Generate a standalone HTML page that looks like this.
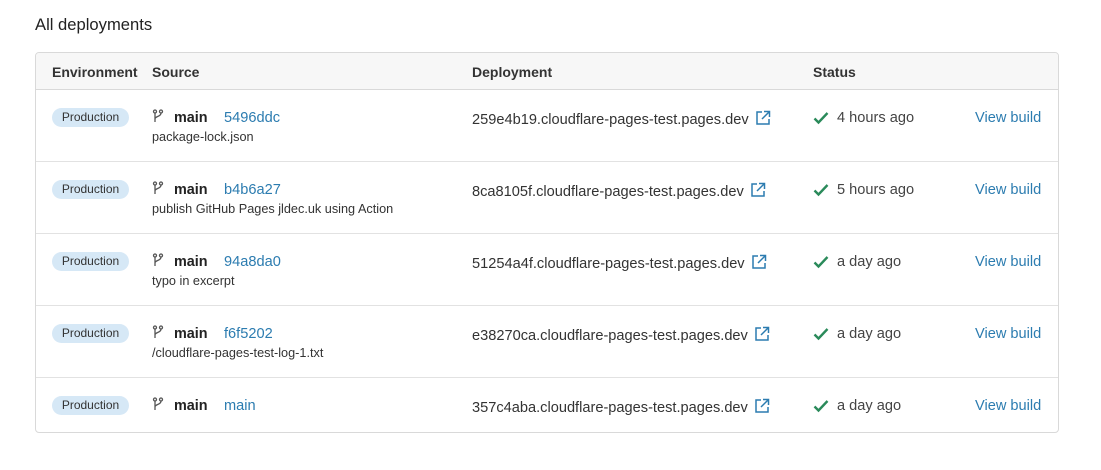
<!DOCTYPE html>
<html><head><style>
body{margin:0;background:#fff;font-family:"Liberation Sans",sans-serif;color:#222;width:1101px;height:470px;overflow:hidden}
h2{position:absolute;left:35px;top:15px;margin:0;font-size:16.6px;font-weight:normal;color:#222}
.t{position:absolute;left:35px;top:52px;width:1022px;height:379px;border:1px solid #d9d9d9;border-radius:4px;overflow:hidden}
.hd{height:36px;background:#f7f7f7;border-bottom:1px solid #d9d9d9;position:relative;font-size:14px;font-weight:bold;color:#333}
.hd span,.r span,.r div{position:absolute}
.r{position:relative;height:71px;border-bottom:1px solid #e2e2e2;font-size:14.6px}
.r.last{border-bottom:none;height:54px}
.b{left:16px;top:18px;width:77px;height:19px;border-radius:10px;background:#d6e8f6;font-size:12px;line-height:19px;text-align:center;color:#333}
.br{left:116px;top:19px}
.mn{left:138px;top:20px;font-weight:bold;font-size:14.4px}
.cm{left:188px;top:20px;color:#2c7cb0}
.msg{left:116px;top:40px;font-size:12.7px;color:#333}
.dp{left:436px;top:20px;color:#333}
.ck{left:777px;top:21px}
.st{left:801px;top:20px;color:#444}
.vb{left:939px;top:20px;color:#2c7cb0}
</style></head><body>
<h2>All deployments</h2>
<div class="t">
<div class="hd"><span style="left:16px;top:11px">Environment</span><span style="left:116px;top:11px">Source</span><span style="left:436px;top:11px">Deployment</span><span style="left:777px;top:11px">Status</span></div>
<div class="r"><div class="b">Production</div><span class="br"><svg width="12" height="14" viewBox="0 0 12 14" fill="none" stroke="#555" stroke-width="1.3"><circle cx="3" cy="2.5" r="1.5"/><circle cx="9" cy="2.5" r="1.5"/><path d="M3 4v9M9 4c0 4-6 3-6 6"/></svg></span><span class="mn">main</span><span class="cm">5496ddc</span><span class="msg">package-lock.json</span><span class="dp">259e4b19.cloudflare-pages-test.pages.dev <svg style="vertical-align:-2px;margin-left:2px" width="16" height="16" viewBox="0 0 16 16" fill="none" stroke="#2c7cb0" stroke-width="1.5"><path d="M7 2H2v12h12V9M9 1.5h5.5V7M14.5 1.5L7 9"/></svg></span><span class="ck"><svg width="16" height="14" viewBox="0 0 16 14" fill="none" stroke="#2a8a5a" stroke-width="2.4"><path d="M1.5 7.5l4 4L14.5 2"/></svg></span><span class="st">4 hours ago</span><span class="vb">View build</span></div>
<div class="r"><div class="b">Production</div><span class="br"><svg width="12" height="14" viewBox="0 0 12 14" fill="none" stroke="#555" stroke-width="1.3"><circle cx="3" cy="2.5" r="1.5"/><circle cx="9" cy="2.5" r="1.5"/><path d="M3 4v9M9 4c0 4-6 3-6 6"/></svg></span><span class="mn">main</span><span class="cm">b4b6a27</span><span class="msg">publish GitHub Pages jldec.uk using Action</span><span class="dp">8ca8105f.cloudflare-pages-test.pages.dev <svg style="vertical-align:-2px;margin-left:2px" width="16" height="16" viewBox="0 0 16 16" fill="none" stroke="#2c7cb0" stroke-width="1.5"><path d="M7 2H2v12h12V9M9 1.5h5.5V7M14.5 1.5L7 9"/></svg></span><span class="ck"><svg width="16" height="14" viewBox="0 0 16 14" fill="none" stroke="#2a8a5a" stroke-width="2.4"><path d="M1.5 7.5l4 4L14.5 2"/></svg></span><span class="st">5 hours ago</span><span class="vb">View build</span></div>
<div class="r"><div class="b">Production</div><span class="br"><svg width="12" height="14" viewBox="0 0 12 14" fill="none" stroke="#555" stroke-width="1.3"><circle cx="3" cy="2.5" r="1.5"/><circle cx="9" cy="2.5" r="1.5"/><path d="M3 4v9M9 4c0 4-6 3-6 6"/></svg></span><span class="mn">main</span><span class="cm">94a8da0</span><span class="msg">typo in excerpt</span><span class="dp">51254a4f.cloudflare-pages-test.pages.dev <svg style="vertical-align:-2px;margin-left:2px" width="16" height="16" viewBox="0 0 16 16" fill="none" stroke="#2c7cb0" stroke-width="1.5"><path d="M7 2H2v12h12V9M9 1.5h5.5V7M14.5 1.5L7 9"/></svg></span><span class="ck"><svg width="16" height="14" viewBox="0 0 16 14" fill="none" stroke="#2a8a5a" stroke-width="2.4"><path d="M1.5 7.5l4 4L14.5 2"/></svg></span><span class="st">a day ago</span><span class="vb">View build</span></div>
<div class="r"><div class="b">Production</div><span class="br"><svg width="12" height="14" viewBox="0 0 12 14" fill="none" stroke="#555" stroke-width="1.3"><circle cx="3" cy="2.5" r="1.5"/><circle cx="9" cy="2.5" r="1.5"/><path d="M3 4v9M9 4c0 4-6 3-6 6"/></svg></span><span class="mn">main</span><span class="cm">f6f5202</span><span class="msg">/cloudflare-pages-test-log-1.txt</span><span class="dp">e38270ca.cloudflare-pages-test.pages.dev <svg style="vertical-align:-2px;margin-left:2px" width="16" height="16" viewBox="0 0 16 16" fill="none" stroke="#2c7cb0" stroke-width="1.5"><path d="M7 2H2v12h12V9M9 1.5h5.5V7M14.5 1.5L7 9"/></svg></span><span class="ck"><svg width="16" height="14" viewBox="0 0 16 14" fill="none" stroke="#2a8a5a" stroke-width="2.4"><path d="M1.5 7.5l4 4L14.5 2"/></svg></span><span class="st">a day ago</span><span class="vb">View build</span></div>
<div class="r last"><div class="b">Production</div><span class="br"><svg width="12" height="14" viewBox="0 0 12 14" fill="none" stroke="#555" stroke-width="1.3"><circle cx="3" cy="2.5" r="1.5"/><circle cx="9" cy="2.5" r="1.5"/><path d="M3 4v9M9 4c0 4-6 3-6 6"/></svg></span><span class="mn">main</span><span class="cm">main</span><span class="dp">357c4aba.cloudflare-pages-test.pages.dev <svg style="vertical-align:-2px;margin-left:2px" width="16" height="16" viewBox="0 0 16 16" fill="none" stroke="#2c7cb0" stroke-width="1.5"><path d="M7 2H2v12h12V9M9 1.5h5.5V7M14.5 1.5L7 9"/></svg></span><span class="ck"><svg width="16" height="14" viewBox="0 0 16 14" fill="none" stroke="#2a8a5a" stroke-width="2.4"><path d="M1.5 7.5l4 4L14.5 2"/></svg></span><span class="st">a day ago</span><span class="vb">View build</span></div>
</div>
</body></html>
